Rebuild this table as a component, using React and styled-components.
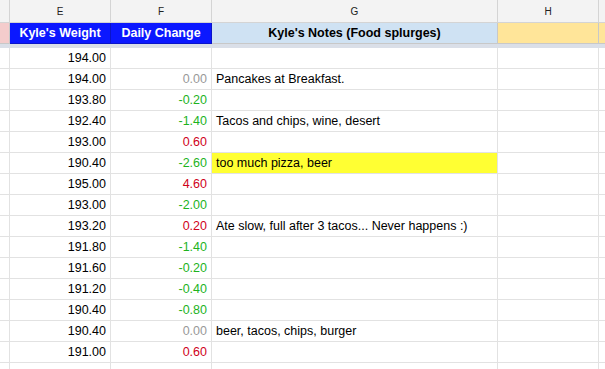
import React from "react";
import styled, { createGlobalStyle } from "styled-components";

const GlobalStyle = createGlobalStyle`
  html, body {
    margin: 0;
    padding: 0;
    background: #ffffff;
    overflow: hidden;
  }
  body {
    font-family: "Liberation Sans", Arial, sans-serif;
  }
`;

const colors = {
  black: "#000000",
  gray: "#999999",
  green: "#1db31d",
  red: "#d0021b",
};

const Sheet = styled.div`
  display: grid;
  grid-template-columns: 10px 101px 101px 286px 101px 1fr;
  grid-template-rows: 23px 21px 4px;
  grid-auto-rows: 21px;
  width: 605px;
  height: 369px;
  overflow: hidden;
  font-size: 12.5px;
  color: #000;
`;

const Cell = styled.div`
  box-sizing: border-box;
  border-right: 1px solid #e2e2e2;
  border-bottom: 1px solid #e2e2e2;
  display: flex;
  align-items: center;
  justify-content: ${(p) => (p.$align === "right" ? "flex-end" : p.$align === "center" ? "center" : "flex-start")};
  padding: 0 4px;
  white-space: nowrap;
  overflow: hidden;
  background: ${(p) => p.$bg || "transparent"};
  color: ${(p) => p.$color || "#000"};
`;

const ColHead = styled(Cell)`
  background: #f3f3f3;
  border-color: #d4d4d4;
  justify-content: center;
  font-size: 10px;
  color: #222;
`;

const Title = styled(Cell)`
  font-weight: bold;
  justify-content: center;
  color: ${(p) => p.$color || "#000"};
  border-color: ${(p) => p.$line || "#c8c8c8"};
`;

const Freeze = styled.div`
  grid-column: 1 / -1;
  background: #dadfe8;
`;

const rows = [
  ["194.00", null, ""],
  ["194.00", "0.00", "Pancakes at Breakfast."],
  ["193.80", "-0.20", ""],
  ["192.40", "-1.40", "Tacos and chips, wine, desert"],
  ["193.00", "0.60", ""],
  ["190.40", "-2.60", "too much pizza, beer", true],
  ["195.00", "4.60", ""],
  ["193.00", "-2.00", ""],
  ["193.20", "0.20", "Ate slow, full after 3 tacos... Never happens :)"],
  ["191.80", "-1.40", ""],
  ["191.60", "-0.20", ""],
  ["191.20", "-0.40", ""],
  ["190.40", "-0.80", ""],
  ["190.40", "0.00", "beer, tacos, chips, burger"],
  ["191.00", "0.60", ""],
  ["", null, ""],
];

function changeColor(v) {
  if (v === null) return colors.black;
  const n = parseFloat(v);
  if (n === 0) return colors.gray;
  return n < 0 ? colors.green : colors.red;
}

export default function App() {
  return (
    <>
      <GlobalStyle />
      <Sheet>
        <ColHead />
        <ColHead>E</ColHead>
        <ColHead>F</ColHead>
        <ColHead>G</ColHead>
        <ColHead>H</ColHead>
        <ColHead />

        <Title $bg="#f4cccc" />
        <Title $bg="#0b18ff" $color="#fff" $line="#0a14c8">Kyle's Weight</Title>
        <Title $bg="#0b18ff" $color="#fff" $line="#0a14c8">Daily Change</Title>
        <Title $bg="#cfe2f3">Kyle's Notes (Food splurges)</Title>
        <Title $bg="#ffe599" />
        <Title $bg="#ffe599" />

        <Freeze />

        {rows.map(([w, c, note, hi], i) => (
          <React.Fragment key={i}>
            <Cell />
            <Cell $align="right">{w}</Cell>
            <Cell $align="right" $color={changeColor(c)}>{c}</Cell>
            <Cell $bg={hi ? "#ffff33" : undefined}>{note}</Cell>
            <Cell />
            <Cell />
          </React.Fragment>
        ))}
      </Sheet>
    </>
  );
}
